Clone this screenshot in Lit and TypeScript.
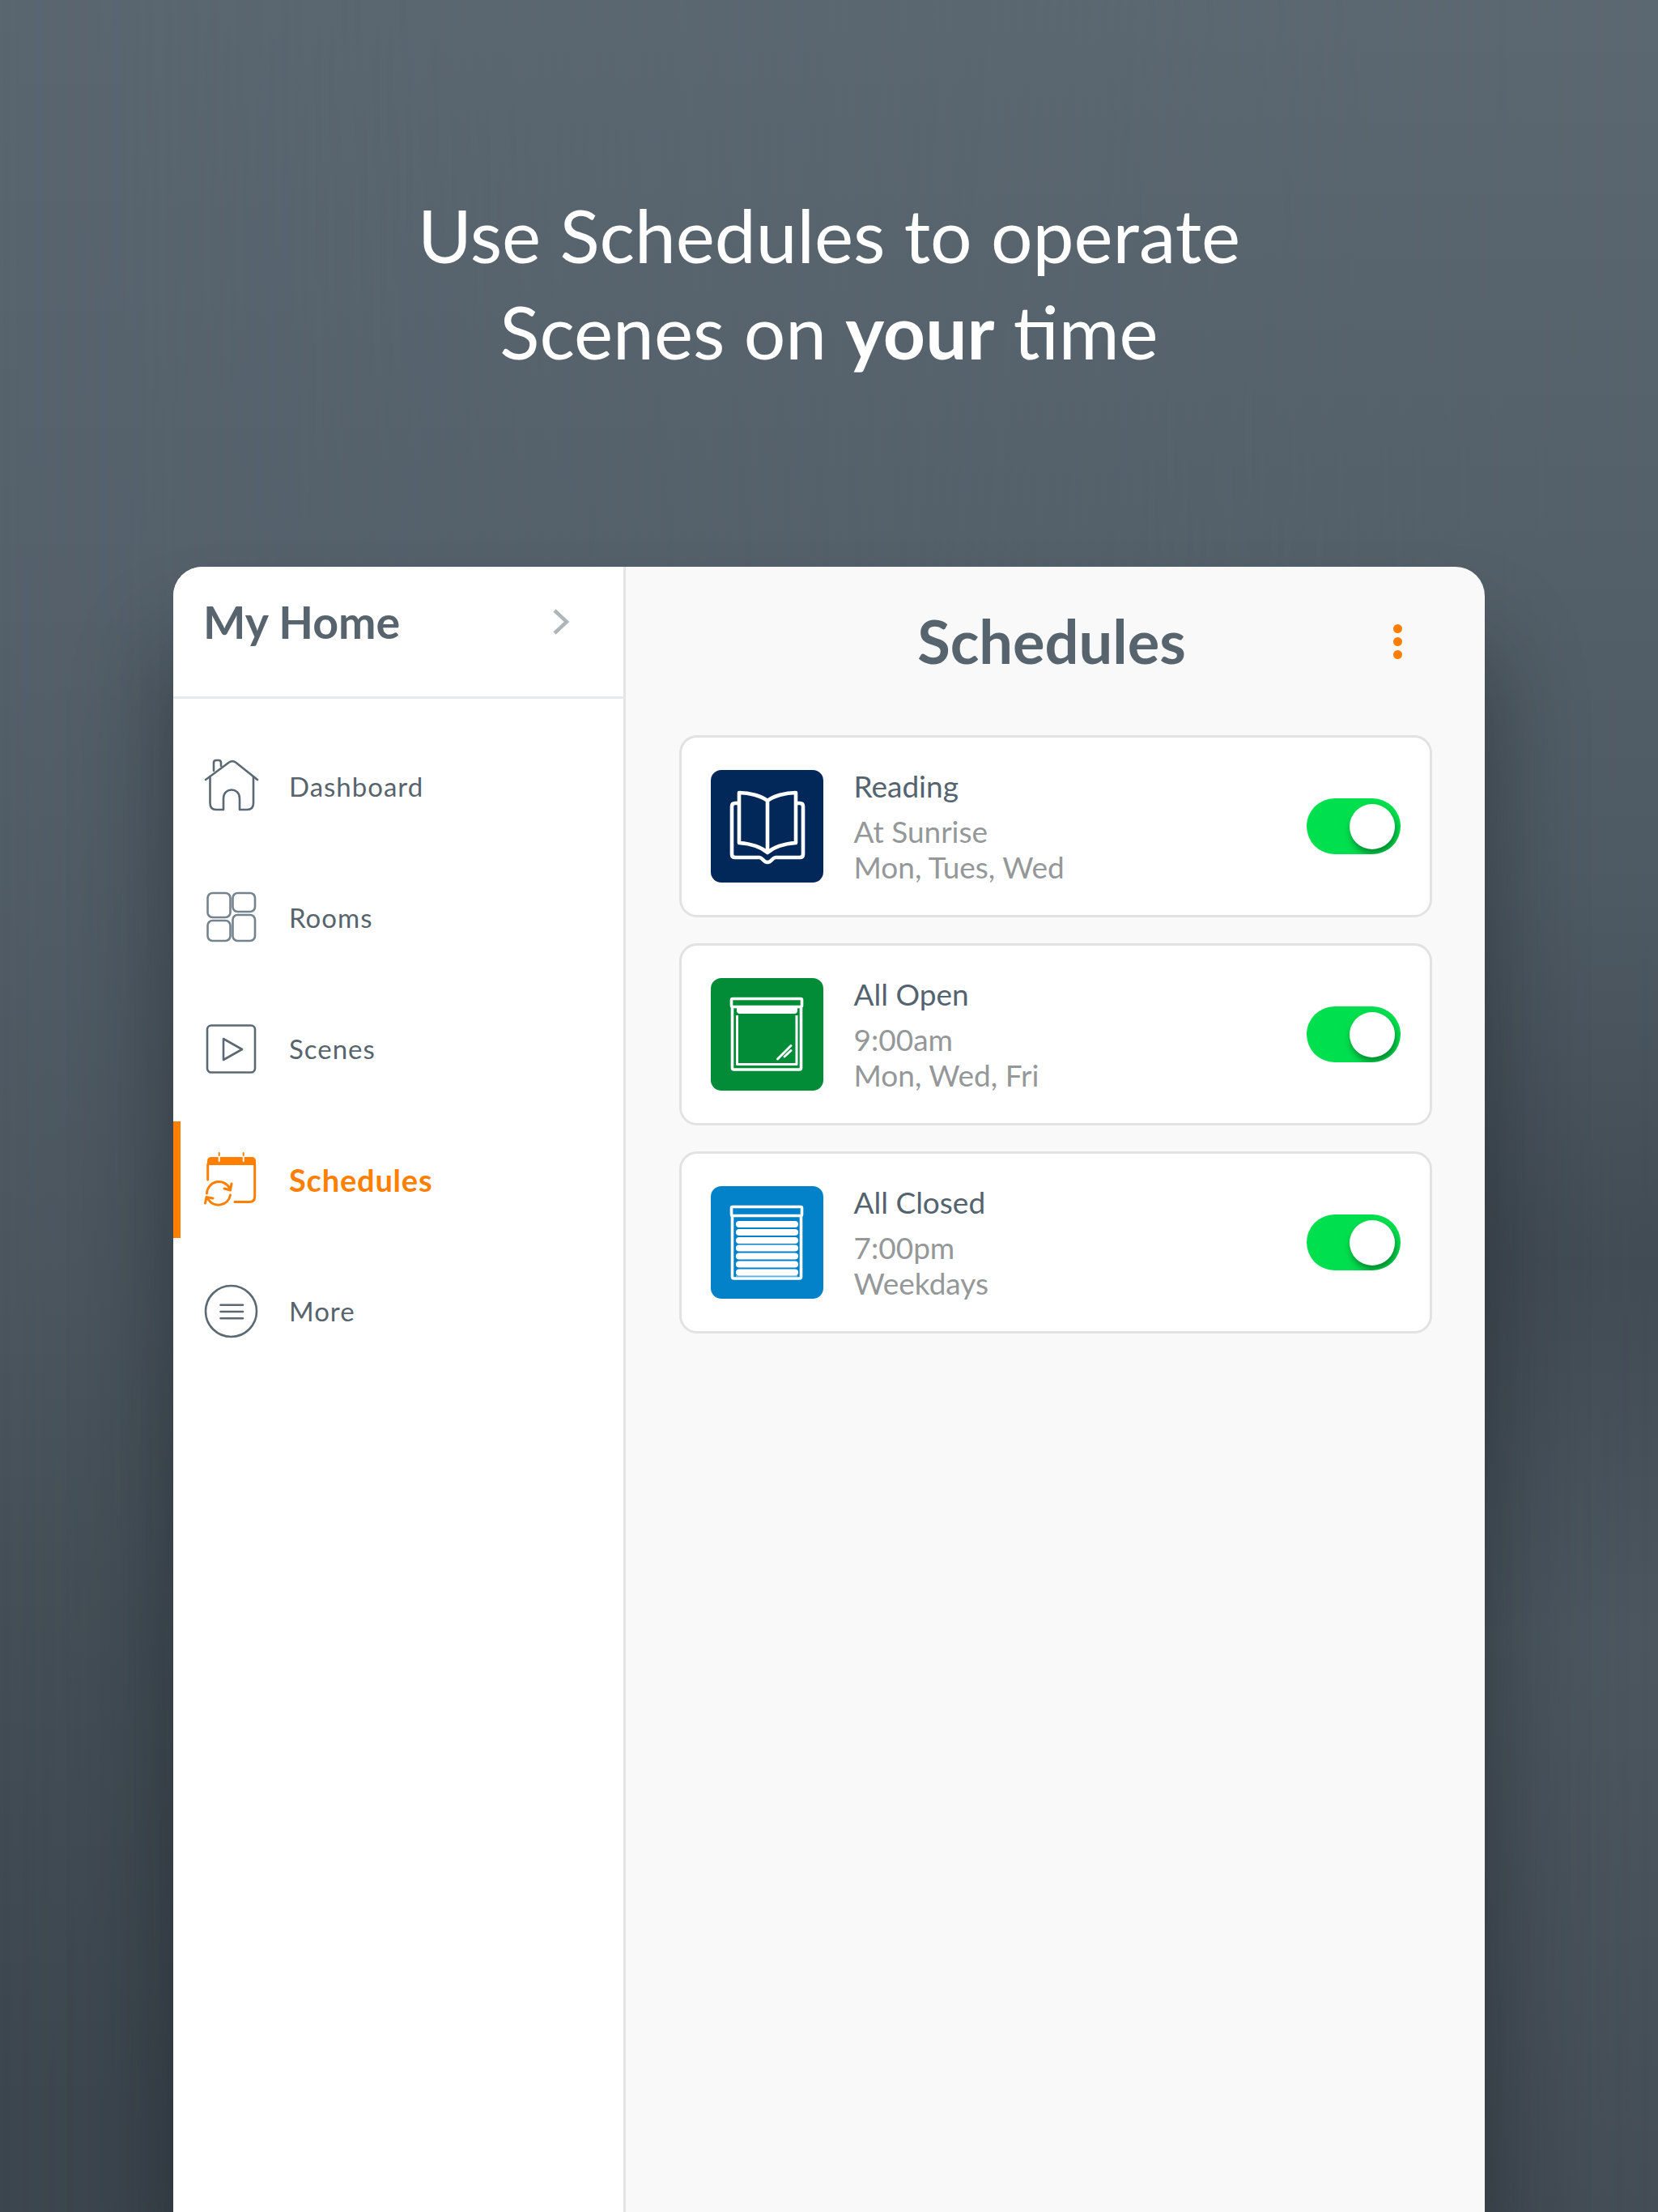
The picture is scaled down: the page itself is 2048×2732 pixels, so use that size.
import { LitElement, html, css, svg } from 'lit';
import { customElement } from 'lit/decorators.js';

const navIcons = {
  house: svg`
    <path d="M14 35 L43 13.5 Q47 11 51 13.5 L78 35" />
    <path d="M19.5 31 V64 Q19.5 72 27 72 H36 V58 C36 44 56 44 56 58 V72 H65 Q73 72 73 64 V31" />
    <path d="M24 24 V14 Q24 11 27 11 H30 Q33 11 33 14 V18" />`,
  rooms: svg`
    <g stroke="#75838e">
      <rect x="16.5" y="13" width="28" height="30" rx="6" />
      <rect x="47.5" y="13" width="27.5" height="23" rx="6" />
      <rect x="16.5" y="47" width="28" height="25" rx="6" />
      <rect x="47.5" y="40" width="27.5" height="32" rx="6" />
    </g>`,
  scenes: svg`
    <rect x="16" y="14.5" width="59" height="58" rx="5" />
    <path d="M36 31 L59 44 L36 57 Z" />`,
  schedules: svg`
    <path d="M16 25 V20 Q16 15 21 15 H71 Q76 15 76 20 V25 Z" fill="#ff7f00" stroke="none" />
    <path d="M30.7 13 V20 M60.7 13 V20" stroke="#fff" stroke-width="2" />
    <path d="M30.7 10 V13 M60.7 10 V13" stroke-width="2" />
    <path d="M16.7 24 V43 M74.7 24 V64 Q74.7 70.5 68 70.5 H50" />
    <path d="M15.5 60 A15 15 0 0 1 44 54" />
    <path d="M44.5 62 A15 15 0 0 1 17 67" />
    <path d="M37 54 L44.5 56 L46 48" />
    <path d="M23 66 L15 64.5 L13.5 72" />`,
  more: svg`
    <circle cx="45.5" cy="43.5" r="31.5" />
    <path d="M32.5 35.7 H60 M32.5 44 H60 M32.5 52.3 H60" />`,
};

const tileIcons = {
  book: svg`
    <g stroke-width="4.6">
      <path d="M35 41 H30 Q26 41 26 45 V104 Q26 108 30 108 H60 C64 108 65 114 70 114 S76 108 80 108 H110 Q114 108 114 104 V45 Q114 41 110 41 H105" />
      <path d="M70 38 C62 32 48 28 35 28 V90 C48 91 62 95 70 102 C78 95 92 91 105 90 V28 C92 28 78 32 70 38 Z M70 38 V102" />
    </g>`,
  window: svg`
    <rect x="25.5" y="25.5" width="87" height="10" rx="1.5" />
    <path d="M32 36 H107 V40 Q107 44 103 44 H36 Q32 44 32 40 Z" fill="#fff" stroke="none" />
    <path d="M26.5 37 V111 Q26.5 113 28.5 113 H109.5 Q111.5 113 111.5 111 V37" />
    <path d="M32.5 46 V106.5 H106 V46" stroke-width="3" />
    <path d="M82.5 100 L99 83.5 M91 97 L99 89.5" stroke-width="3" stroke-linecap="round" />`,
  shade: svg`
    <rect x="25.5" y="25.5" width="87" height="11" rx="1.5" />
    <path d="M26.5 37 V112 Q26.5 114 28.5 114 H109.5 Q111.5 114 111.5 112 V37" />
    <path d="M31 111 H107" stroke="#5db3e3" stroke-width="2" />
    ${[47, 57, 67, 76.5, 86.5, 96.5, 106.5].map(
      (y) => svg`<rect x="31" y=${y - 4} width="77" height="8" rx="4" fill="#fff" stroke="none" />`
    )}`,
};

type NavKey = keyof typeof navIcons;
type TileKey = keyof typeof tileIcons;

const navItems: { label: string; icon: NavKey; active?: boolean }[] = [
  { label: 'Dashboard', icon: 'house' },
  { label: 'Rooms', icon: 'rooms' },
  { label: 'Scenes', icon: 'scenes' },
  { label: 'Schedules', icon: 'schedules', active: true },
  { label: 'More', icon: 'more' },
];

const schedules: { name: string; when: string; days: string; icon: TileKey; tone: string }[] = [
  { name: 'Reading', when: 'At Sunrise', days: 'Mon, Tues, Wed', icon: 'book', tone: 'navy' },
  { name: 'All Open', when: '9:00am', days: 'Mon, Wed, Fri', icon: 'window', tone: 'green' },
  { name: 'All Closed', when: '7:00pm', days: 'Weekdays', icon: 'shade', tone: 'blue' },
];

@customElement('app-root')
export class AppRoot extends LitElement {
  static styles = css`
    :host {
      display: block;
      position: relative;
      height: 2732px;
      overflow: hidden;
      font-family: 'Lato', 'Open Sans', sans-serif;
      background: linear-gradient(180deg, #5a6670 0%, #55616b 26%, #4b565f 58%, #434e56 73%, #3c464e 95%);
    }
    /* the right side of the backdrop dips darker mid page, then recovers */
    :host::before {
      content: '';
      position: absolute;
      inset: 0;
      background: linear-gradient(180deg, #5c6871 0%, #55616a 22%, #4e5a63 40%, #414b54 57%, #4b565f 74%, #444d56 100%);
      -webkit-mask-image: linear-gradient(90deg, transparent 0%, #000 100%);
      mask-image: linear-gradient(90deg, transparent 0%, #000 100%);
    }
    .hero {
      position: relative;
      height: 700px;
      box-sizing: border-box;
      padding-top: 230px;
      text-align: center;
      color: #fff;
      font-size: 91px;
      line-height: 119px;
      font-weight: 400;
    }
    .hero b {
      font-weight: 700;
    }
    .panel {
      position: relative;
      margin-left: 214px;
      width: 1620px;
      height: 2032px;
      display: flex;
      border-radius: 36px 36px 0 0;
      background: #f9f9f9;
      box-shadow: 0 100px 120px rgba(15, 20, 25, 0.45);
    }
    .side {
      width: 556px;
      background: #fff;
      border-right: 3px solid #e5e5e5;
      border-radius: 36px 0 0 0;
      flex: none;
    }
    .home {
      height: 163px;
      box-sizing: border-box;
      border-bottom: 3px solid #e6e9ed;
      display: flex;
      align-items: flex-start;
      justify-content: space-between;
      padding: 32px 65px 0 37px;
      color: #57646e;
      font-size: 55.5px;
      line-height: 72px;
      font-weight: 700;
    }
    .chev {
      width: 24px;
      height: 36px;
      margin-top: 18px;
      fill: none;
      stroke: #aeb6ba;
      stroke-width: 4.5;
    }
    .nav {
      padding-top: 29px;
    }
    .item {
      position: relative;
      height: 162px;
      display: flex;
      align-items: center;
      gap: 27px;
      padding-left: 26px;
      color: #57646e;
      font-size: 33px;
      letter-spacing: 1px;
    }
    .item span {
      margin-top: -4px;
    }
    .item svg {
      width: 90px;
      height: 90px;
      fill: none;
      stroke: #5a6974;
      stroke-width: 2.6;
      stroke-linecap: round;
      stroke-linejoin: round;
    }
    .item.active {
      color: #ff7f00;
      font-weight: 700;
      font-size: 38px;
      letter-spacing: 0.8px;
    }
    .item.active svg {
      stroke: #ff7f00;
      stroke-width: 3;
    }
    .item.active::before {
      content: '';
      position: absolute;
      left: 0;
      top: 7px;
      bottom: 11px;
      width: 9px;
      background: #ff7f00;
    }
    .main {
      flex: 1;
      min-width: 0;
    }
    .top {
      position: relative;
      height: 208px;
      box-sizing: border-box;
      padding-top: 40px;
      text-align: center;
      color: #57646e;
      font-size: 74px;
      line-height: 104px;
      font-weight: 700;
    }
    .top span {
      margin-right: 9px;
    }
    .dots {
      position: absolute;
      left: 948px;
      top: 71px;
      display: flex;
      flex-direction: column;
      gap: 5px;
    }
    .dots i {
      width: 11px;
      height: 11px;
      border-radius: 50%;
      background: #ff7f00;
    }
    .list {
      width: 930px;
      margin-left: 66px;
      display: flex;
      flex-direction: column;
      gap: 32px;
    }
    .row {
      height: 225px;
      box-sizing: border-box;
      border: 3px solid #e2e2e2;
      border-radius: 22px;
      background: #fff;
      display: flex;
      align-items: center;
      padding: 0 36px;
    }
    .tile {
      width: 139px;
      height: 139px;
      flex: none;
      border-radius: 13px;
      fill: none;
      stroke: #fff;
      stroke-width: 3.6;
      stroke-linejoin: round;
    }
    .navy {
      background: #012859;
    }
    .green {
      background: #028c38;
    }
    .blue {
      background: #0482c9;
    }
    .text {
      flex: 1;
      margin-left: 37.5px;
      margin-top: -1px;
      color: #959899;
      font-size: 37px;
      line-height: 44px;
    }
    .name {
      color: #536370;
      font-size: 37px;
      line-height: 46px;
      margin-bottom: 11px;
    }
    .toggle {
      width: 116px;
      height: 69px;
      box-sizing: border-box;
      border-radius: 35px;
      background: #00df4e;
      overflow: hidden;
      display: flex;
      align-items: center;
      justify-content: flex-end;
      padding-right: 7px;
    }
    .toggle i {
      width: 56px;
      height: 56px;
      border-radius: 50%;
      background: #fff;
      box-shadow: 2px 6px 8px rgba(0, 70, 25, 0.55);
    }
  `;

  render() {
    return html`
      <div class="hero">
        Use Schedules to operate<br />
        Scenes on <b>your</b> time
      </div>
      <div class="panel">
        <aside class="side">
          <div class="home">
            <span>My Home</span>
            <svg class="chev" viewBox="0 0 24 36"><path d="M4 4 L19 18 L4 32" /></svg>
          </div>
          <nav class="nav">
            ${navItems.map(
              (n) => html`
                <div class="item ${n.active ? 'active' : ''}">
                  <svg viewBox="0 0 90 90">${navIcons[n.icon]}</svg>
                  <span>${n.label}</span>
                </div>
              `
            )}
          </nav>
        </aside>
        <main class="main">
          <div class="top">
            <span>Schedules</span>
            <div class="dots"><i></i><i></i><i></i></div>
          </div>
          <div class="list">
            ${schedules.map(
              (s) => html`
                <div class="row">
                  <svg class="tile ${s.tone}" viewBox="0 0 139 139">${tileIcons[s.icon]}</svg>
                  <div class="text">
                    <div class="name">${s.name}</div>
                    <div>${s.when}</div>
                    <div>${s.days}</div>
                  </div>
                  <div class="toggle"><i></i></div>
                </div>
              `
            )}
          </div>
        </main>
      </div>
    `;
  }
}
